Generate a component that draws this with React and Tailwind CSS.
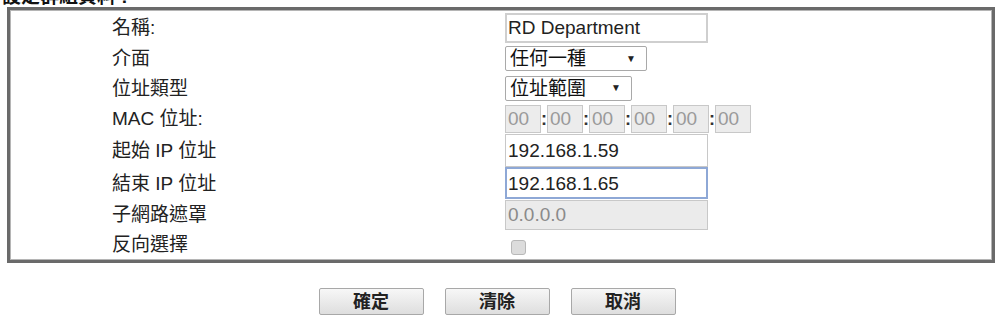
import React from "react";

const font = { fontFamily: '"Liberation Sans", "Noto Sans CJK TC", Arial, sans-serif' };

function Row({ h, label, children }) {
  return (
    <div className="flex items-center" style={{ height: h }}>
      <div className="w-[495px] shrink-0 pl-[102px] text-[19px] leading-none text-[#222]">{label}</div>
      <div className="flex items-center">{children}</div>
    </div>
  );
}

function Select({ text, w }) {
  return (
    <div
      className="flex items-center justify-between h-[25px] border border-[#a9a9a9] rounded-[2px] bg-white pl-[4px] pr-[10px] text-[19px] leading-none text-[#111]"
      style={{ width: w }}
    >
      <span>{text}</span>
      <span className="text-[10px] text-[#222]">▼</span>
    </div>
  );
}

function Mac() {
  const boxes = [0, 1, 2, 3, 4, 5];
  return (
    <div className="flex items-center h-[28px]">
      {boxes.map((i) => (
        <React.Fragment key={i}>
          {i > 0 && (
            <span className="w-[6px] text-center text-[18px] leading-none font-bold text-[#333]">:</span>
          )}
          <div className="w-[36px] h-[28px] border border-[#c8c8c8] bg-[#ececec] pl-[2px] flex items-center text-[19px] leading-none text-[#9a9a9a]">
            00
          </div>
        </React.Fragment>
      ))}
    </div>
  );
}

export default function App() {
  return (
    <div className="w-[996px] h-[321px] bg-white relative overflow-hidden" style={font}>
      <div className="h-[7px] overflow-hidden">
        <div className="-mt-[13px] ml-[2px] text-[19px] leading-[19px] font-bold text-[#111]">設定群組資料 :</div>
      </div>
      <div className="ml-[7px] w-[988px] h-[256px] border-[3px] border-[#6a6a6a] shadow-[inset_0_0_0_1px_#b5b5b5] pt-[1px]">
        <Row h={33} label="名稱:">
          <div className="w-[203px] h-[30px] border-2 border-[#cfcfcf] bg-white flex items-center pl-[1px] text-[19px] leading-none text-[#222]">
            RD Department
          </div>
        </Row>
        <Row h={29} label="介面">
          <Select text="任何一種" w={142} />
        </Row>
        <Row h={30} label="位址類型">
          <Select text="位址範圍" w={127} />
        </Row>
        <Row h={31} label="MAC 位址:">
          <Mac />
        </Row>
        <Row h={33} label="起始 IP 位址">
          <div className="w-[203px] h-[33px] border border-[#c8c8c8] bg-white flex items-center pl-[2px] text-[19px] leading-none text-[#222]">
            192.168.1.59
          </div>
        </Row>
        <Row h={32} label="結束 IP 位址">
          <div className="w-[203px] h-[32px] border-2 border-[#8ea8d6] bg-white flex items-center pl-[1px] text-[19px] leading-none text-[#222]">
            192.168.1.65
          </div>
        </Row>
        <Row h={31} label="子網路遮罩">
          <div className="w-[203px] h-[30px] border border-[#c8c8c8] bg-[#ebebeb] flex items-center pl-[2px] text-[19px] leading-none text-[#8a8a8a]">
            0.0.0.0
          </div>
        </Row>
        <Row h={29} label="反向選擇">
          <div className="ml-[6px] mt-[6px] w-[15px] h-[15px] rounded-[3px] border border-[#b8b8b8] bg-[#dcdcdc]" />
        </Row>
      </div>
      <div className="flex justify-center gap-[21px] mt-[25px] pr-[2px]">
        {["確定", "清除", "取消"].map((t) => (
          <div
            key={t}
            className="w-[105px] h-[27px] border border-[#a8a8a8] rounded-[2px] bg-gradient-to-b from-[#f7f7f7] to-[#dedede] flex items-center justify-center text-[18px] leading-none font-bold text-[#222]"
          >
            {t}
          </div>
        ))}
      </div>
    </div>
  );
}
